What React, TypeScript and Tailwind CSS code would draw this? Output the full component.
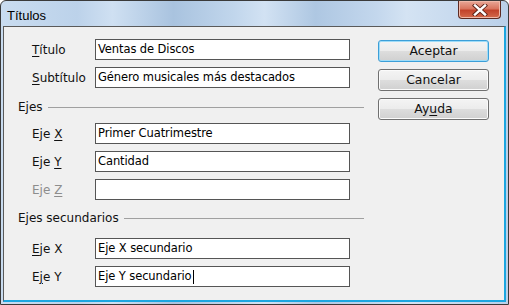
import React from "react";

const font = "font-['DejaVu_Sans',sans-serif]";

function Row({
  label,
  value,
  disabled,
  caret,
}: {
  label: React.ReactNode;
  value: string;
  disabled?: boolean;
  caret?: boolean;
}) {
  return (
    <div className="flex h-[21px] items-center pl-[14px]">
      <div className={`w-[63px] text-[12px] ${disabled ? "text-[#8d8d8d]" : "text-[#111111]"}`}>{label}</div>
      <div className="flex h-[21px] w-[255px] items-center border border-[#555555] bg-white pl-[2px] text-[11.5px] tracking-[-0.1px] text-black">
        <span className="whitespace-pre">{value}</span>
        {caret && <span className="ml-[1px] inline-block h-[14px] w-px bg-black" />}
      </div>
    </div>
  );
}

function Group({ title }: { title: string }) {
  return (
    <div className="flex h-[14px] items-center gap-[5px] text-[12px] text-[#111111]">
      <span className="whitespace-nowrap">{title}</span>
      <div className="flex-1 border-t border-[#a0a0a0]" />
    </div>
  );
}

function Btn({ children, primary }: { children: React.ReactNode; primary?: boolean }) {
  return (
    <button
      className={`flex h-[22px] w-[111px] items-center justify-center rounded-[3px] border text-[12.4px] text-[#111111] bg-[linear-gradient(180deg,#f4f4f4_0%,#ececec_48%,#dddddd_52%,#d0d0d0_100%)] ${
        primary ? "border-[#3c9fd8] shadow-[inset_0_0_0_1px_#9fdcf8]" : "border-[#707070] shadow-[inset_0_0_0_1px_#fbfbfb]"
      }`}
    >
      {children}
    </button>
  );
}

const u = (s: string) => <span className="underline decoration-1 underline-offset-2">{s}</span>;

export default function App() {
  return (
    <div className={`h-[305px] w-[509px] ${font}`}>
      <div className="flex h-full w-full flex-col rounded-t-[6px] border border-[#3a3a3a] bg-[linear-gradient(90deg,#c9dcf0_0%,#bcd2ea_15%,#cfe0f2_22%,#a9c3df_34%,#c1d6ec_46%,#d2e2f3_52%,#aec7e2_62%,#c3d7ed_74%,#d4e3f3_80%,#bad0e9_100%)]">
        {/* title bar */}
        <div className="flex h-[25px] items-start justify-between pl-[6px] pr-[7px]">
          <span className="mt-[5px] font-['Liberation_Sans',sans-serif] text-[13px] text-black">Títulos</span>
          <div className="flex h-[18px] w-[43px] items-center justify-center rounded-b-[4px] border border-t-0 border-[#5c2a22] bg-[linear-gradient(180deg,#e9a898_0%,#d9755f_45%,#c2432b_55%,#d46a4c_100%)] shadow-[inset_0_0_0_1px_#f0b8a8]">
            <svg width="16" height="12" viewBox="0 0 16 12">
              <path d="M3 1.5 L13 10.5 M13 1.5 L3 10.5" stroke="#5a2016" strokeWidth="4.2" strokeLinecap="square" />
              <path d="M3 1.5 L13 10.5 M13 1.5 L3 10.5" stroke="#ffffff" strokeWidth="2.4" strokeLinecap="square" />
            </svg>
          </div>
        </div>

        {/* client */}
        <div className="mx-[2px] mb-[2px] flex flex-1 border border-[#5a5a5a] border-b-[#1ba6e0] border-r-[#1ba6e0] border-b-2 border-r-2 bg-[#f0f0f0] pl-[14px] pt-[12px]">
          <div className="flex w-[346px] flex-col">
            <Row label={<>{u("T")}ítulo</>} value="Ventas de Discos" />
            <div className="mt-[7px]">
              <Row label={<>{u("S")}ubtítulo</>} value="Género musicales más destacados" />
            </div>
            <div className="mt-[12px]">
              <Group title="Ejes" />
            </div>
            <div className="mt-[9px] flex flex-col gap-[7px]">
              <Row label={<>Eje {u("X")}</>} value="Primer Cuatrimestre" />
              <Row label={<>Eje {u("Y")}</>} value="Cantidad" />
              <Row label={<>Eje {u("Z")}</>} value="" disabled />
            </div>
            <div className="mt-[11px]">
              <Group title="Ejes secundarios" />
            </div>
            <div className="mt-[13px] flex flex-col gap-[7px]">
              <Row label={<>{u("E")}je X</>} value="Eje X secundario" />
              <Row label={<>E{u("j")}e Y</>} value="Eje Y secundario" caret />
            </div>
          </div>
          <div className="ml-[14px] mt-[1px] flex flex-col gap-[7px]">
            <Btn primary>Aceptar</Btn>
            <Btn>Cancelar</Btn>
            <Btn>
              Ay{u("u")}da
            </Btn>
          </div>
        </div>
      </div>
    </div>
  );
}
